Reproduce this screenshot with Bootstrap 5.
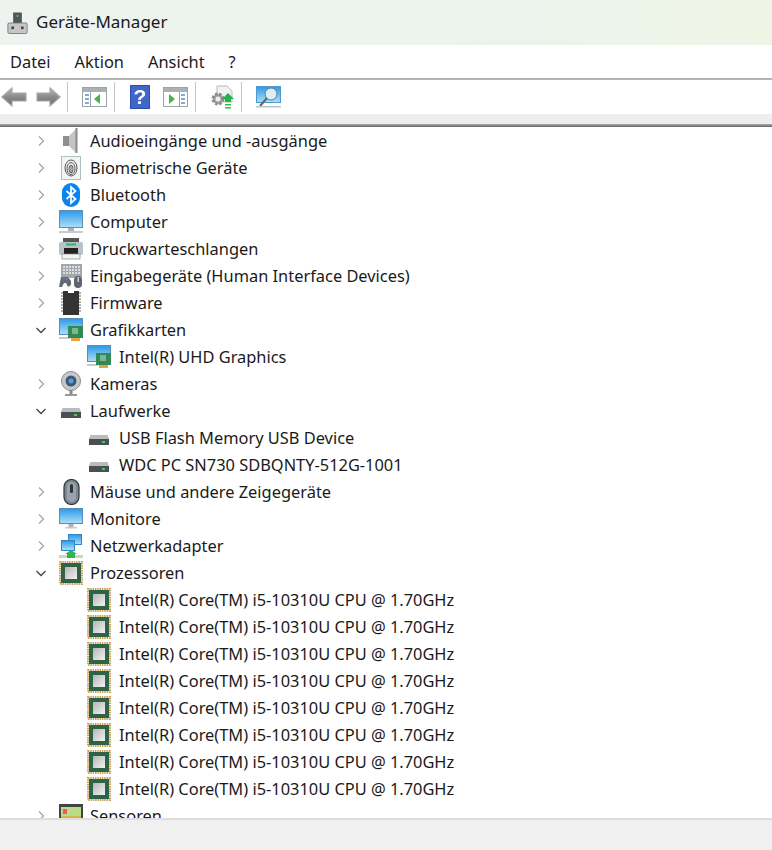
<!DOCTYPE html>
<html lang="de">
  <head>
    <meta charset="UTF-8" />
    <meta name="viewport" content="width=device-width, initial-scale=1.0" />
    <title>Geräte-Manager</title>
    <link
      href="https://cdn.jsdelivr.net/npm/bootstrap@5.3.0/dist/css/bootstrap.min.css"
      rel="stylesheet"
    />
    <style>
      html, body { height: 850px; overflow: hidden; }
      body { font-family: "Noto Sans", "Open Sans", sans-serif; color: #1a1a1a; background: #fff; }
      .win-title { height: 45px; background: linear-gradient(90deg, #eef3f0 0%, #ecf3ec 70%, #eef5e5 100%); padding-left: 7px; font-size: 17px; }
      .win-title span { margin-left: 8px; margin-top: -1px; }
      .win-menu { height: 33px; font-size: 16.4px; padding-left: 10px; gap: 24px; border-bottom: 2px solid #b4b4b4; box-sizing: content-box; }
      .win-menu span { margin-top: 1px; }
      .win-tools { height: 34px; }
      .tool-group { height: 30px; padding: 0 7px 0 14px; border-right: 1px solid #c4c4c4; gap: 13px; }
      .tool-group svg { filter: blur(.35px); }
      .tool-group.first { padding: 0 6px 0 1px; gap: 9px; }
      .tool-group.help { padding-left: 15px; }
      .tool-group.update { padding-right: 6px; }
      .tool-group.last { border-right: 0; }
      .tool-strip { height: 10px; background: #eeeeee; }
      .tool-line { height: 3px; background: linear-gradient(180deg, #aaa, #666); }
      .dev-tree { height: 691px; overflow: hidden; font-size: 16.4px; line-height: 27px; }
      .tree-row { height: 27px; padding-left: 34px; white-space: nowrap; }
      .tree-row.child { padding-left: 86px; }
      .tree-chev { width: 14px; height: 14px; margin-right: 10px; flex: none; }
      .tree-ico { width: 26px; height: 26px; margin-right: 6px; flex: none; filter: blur(.3px); }
      .child .tree-ico { margin-right: 7px; }
      .win-status { height: 33px; background: #f0f0f0; border-top: 2px solid #dedede; }
    </style>
  </head>
  <body>
    <svg width="0" height="0" class="position-absolute">
      <defs>
        <linearGradient id="gScreen" x1="0" y1="0" x2="0" y2="1"><stop offset="0" stop-color="#2f9be8" /><stop offset="1" stop-color="#a9dcf8" /></linearGradient>
        <linearGradient id="gCore" x1="0" y1="0" x2="1" y2="1"><stop offset="0" stop-color="#b5b5b5" /><stop offset="1" stop-color="#f2f2f2" /></linearGradient>
        <linearGradient id="gArrow" x1="0" y1="0" x2="0" y2="1"><stop offset="0" stop-color="#b8b8b8" /><stop offset=".5" stop-color="#8a8a8a" /><stop offset="1" stop-color="#666" /></linearGradient>
        <symbol id="i-open" viewBox="0 0 14 14"><path d="M2.5 5l4.500 4.500 4.500-4.500" fill="none" stroke="#444" stroke-width="1.300" /></symbol>
        <symbol id="i-closed" viewBox="0 0 14 14"><path d="M5 2.500l4.500 4.500-4.500 4.500" fill="none" stroke="#a6a6a6" stroke-width="1.300" /></symbol>
        <symbol id="i-audio" viewBox="0 0 26 26"><path d="M5 8h6v10H5z" fill="#8f8f8f" /><path d="M11 8l7-7v24l-7-7z" fill="#c4c4c4" /><path d="M17.500 0h2v25h-2z" fill="#8a8a8a" /></symbol>
        <symbol id="i-bio" viewBox="0 0 26 26"><rect x="3.500" y="1.500" width="19" height="23" fill="#f2f5f2" stroke="#a9c4bd" /><g fill="none" stroke="#555" stroke-width="1"><ellipse cx="13" cy="13" rx="6" ry="8" /><ellipse cx="13" cy="13.500" rx="4" ry="6" /><ellipse cx="13" cy="14" rx="2" ry="4" /><path d="M13 11v7" /></g></symbol>
        <symbol id="i-bt" viewBox="0 0 26 26"><rect x="4" y="1" width="18" height="24" rx="9" fill="#0a82f0" /><path d="M8.500 9l9 8-4.500 4V5l4.500 4-9 8" fill="none" stroke="#fff" stroke-width="1.700" /></symbol>
        <symbol id="i-pc" viewBox="0 0 26 26"><rect x="1" y="1" width="24" height="18" fill="#5a8fb5" /><rect x="2" y="2" width="22" height="16" fill="url(#gScreen)" /><rect x="10" y="19" width="6" height="3" fill="#a9b4bc" /><rect x="1" y="22" width="24" height="2" fill="#c4ccd2" /></symbol>
        <symbol id="i-print" viewBox="0 0 26 26"><rect x="5" y="2" width="16" height="5" fill="#555" /><rect x="1" y="6" width="24" height="13" rx="2" fill="#b9c2c6" /><rect x="8" y="7.500" width="10" height="2" fill="#2fb36b" /><rect x="6" y="12" width="14" height="6" fill="#222" /><rect x="4" y="18" width="18" height="5" fill="#f4f4f4" stroke="#888" stroke-width=".7" /></symbol>
        <symbol id="i-kbd" viewBox="0 0 26 26"><rect x="3" y="1" width="21" height="14" fill="#a3a7ab" /><path d="M5 4h17M5 7h17M5 10h17" stroke="#eee" stroke-width="1.500" stroke-dasharray="2 1" /><path d="M1 24l2-10h7l3 4v4l-3 2-2-4H6l-2 4z" fill="#5f6a75" /><rect x="5" y="15" width="2" height="2" fill="#2f86e0" /><rect x="8" y="15" width="2" height="2" fill="#e0533a" /><rect x="16" y="13" width="8" height="12" rx="4" fill="#5d6670" /><rect x="19.500" y="14" width="1.500" height="5" fill="#ccc" /></symbol>
        <symbol id="i-fw" viewBox="0 0 26 26"><path d="M5 1h5v2h6V1h5v24H5z" fill="#333" /><path d="M3 3h2M3 6h2M3 9h2M3 12h2M3 15h2M3 18h2M3 21h2M21 3h2M21 6h2M21 9h2M21 12h2M21 15h2M21 18h2M21 21h2" stroke="#999" stroke-width="1.500" /></symbol>
        <symbol id="i-gpu" viewBox="0 0 26 26"><rect x="1" y="1" width="24" height="17" fill="#5a8fb5" /><rect x="2" y="2" width="22" height="15" fill="url(#gScreen)" /><rect x="1" y="20" width="11" height="2" fill="#c4ccd2" /><rect x="10" y="9" width="15" height="12" fill="#2f8a58" /><rect x="14" y="11" width="6" height="6" fill="#7fb58f" /><rect x="13" y="21" width="9" height="3" fill="#e8a33c" /></symbol>
        <symbol id="i-cam" viewBox="0 0 26 26"><circle cx="13" cy="10" r="9.500" fill="#c8c8c8" stroke="#8b8b8b" /><circle cx="13" cy="10" r="5.500" fill="#3c5878" /><circle cx="13" cy="10" r="2.500" fill="#5f9bd3" /><rect x="11.500" y="19" width="3" height="4" fill="#888" /><rect x="7" y="23" width="12" height="2" fill="#999" /></symbol>
        <symbol id="i-drive" viewBox="0 0 26 26"><path d="M4.500 10h17l1.500 4H3z" fill="#b9bcbc" /><rect x="3" y="14" width="20" height="6" fill="#4b4f52" /><rect x="16" y="16" width="3" height="2" fill="#36d05a" /></symbol>
        <symbol id="i-mouse" viewBox="0 0 26 26"><rect x="6" y="0.500" width="15" height="25" rx="7.500" fill="#7b8794" stroke="#333" stroke-width="1.200" /><rect x="9" y="3" width="9" height="20" rx="4.500" fill="#97a3b0" /><rect x="12" y="5" width="3" height="9" rx="1.500" fill="#333" /></symbol>
        <symbol id="i-mon" viewBox="0 0 26 26"><rect x="1" y="2" width="24" height="16" fill="#5a8fb5" /><rect x="2" y="3" width="22" height="14" fill="url(#gScreen)" /><rect x="10.500" y="18" width="5" height="3" fill="#a9b4bc" /><rect x="7" y="21" width="12" height="1.500" fill="#c4ccd2" /></symbol>
        <symbol id="i-net" viewBox="0 0 26 26"><rect x="10" y="1" width="14" height="11" fill="#2f86c8" /><rect x="11" y="2" width="12" height="9" fill="url(#gScreen)" /><rect x="3" y="7" width="14" height="11" fill="#2f86c8" /><rect x="4" y="8" width="12" height="9" fill="url(#gScreen)" /><rect x="1" y="22" width="24" height="3" fill="#c9d6c9" /><path d="M9 25v-4H7l6-4 6 4h-2v4z" fill="#2fb54d" /></symbol>
        <symbol id="i-cpu" viewBox="0 0 26 26"><rect x="2" y="2" width="22" height="22" fill="none" stroke="#c9a45a" stroke-width="2" stroke-dasharray="1.500 .8" /><rect x="3" y="3" width="20" height="20" fill="#2f6347" /><rect x="7" y="7" width="12" height="12" fill="url(#gCore)" /></symbol>
        <symbol id="i-sensor" viewBox="0 0 26 26"><rect x="1" y="1" width="24" height="22" fill="#444" /><rect x="3" y="4" width="20" height="18" fill="#b9dc84" /><rect x="5" y="6" width="4" height="5" fill="#ef5a5a" /><path d="M3 14h20M14 14v8" stroke="#e0a83c" stroke-width="1.500" /></symbol>
        <symbol id="t-back" viewBox="0 0 26 20"><path d="M.8 10L11 1v5h14v8H11v5z" fill="url(#gArrow)" stroke="#a8a8a8" stroke-width="1.200" /></symbol>
        <symbol id="t-fwd" viewBox="0 0 25 20"><path d="M24.200 10L14 1v5H1v8h13v5z" fill="url(#gArrow)" stroke="#a8a8a8" stroke-width="1.200" /></symbol>
        <symbol id="t-left" viewBox="0 0 25 20"><rect x=".5" y=".5" width="24" height="19" fill="#fff" stroke="#9aa4a8" /><rect x="1" y="1" width="23" height="4" fill="#aab2b6" /><path d="M8.500 5v15" stroke="#9aa4a8" /><path d="M3 8h4M3 12h4M3 16h4" stroke="#5a8fc8" stroke-width="1.500" /><path d="M12 12l6-5v10z" fill="#4fb04f" /></symbol>
        <symbol id="t-right" viewBox="0 0 25 20"><rect x=".5" y=".5" width="24" height="19" fill="#fff" stroke="#9aa4a8" /><rect x="1" y="1" width="23" height="4" fill="#aab2b6" /><path d="M16.500 5v15" stroke="#9aa4a8" /><path d="M18 8h4M18 12h4M18 16h4" stroke="#5a8fc8" stroke-width="1.500" /><path d="M12 12L6 7v10z" fill="#4fb04f" /></symbol>
        <symbol id="t-help" viewBox="0 0 20 24"><rect width="20" height="24" fill="#2b4ea8" /><rect x="1" y="1" width="18" height="22" fill="#3f66c8" /><text x="10" y="19" text-anchor="middle" font-family="Liberation Sans" font-weight="700" font-size="21" fill="#fff">?</text></symbol>
        <symbol id="t-update" viewBox="0 0 25 24"><path d="M7 1h10l5 5v11H7z" fill="#f2f2f2" stroke="#bbb" /><circle cx="8" cy="14" r="5" fill="#a0a0a0" stroke="#8d8d8d" stroke-width="3" stroke-dasharray="2.500 1.500" /><circle cx="8" cy="14" r="2.500" fill="#eee" /><path d="M18 8l6 6h-3v3h-6v-3h-3z" fill="#22b44a" /><path d="M15 19h6v1.500h-6zM15 22h6v1.500h-6z" fill="#22c44a" /></symbol>
        <symbol id="t-scan" viewBox="0 0 25 23"><rect x="0" y="0" width="25" height="17" fill="#4c9ad0" /><rect x="1" y="1" width="23" height="15" fill="url(#gScreen)" /><circle cx="15" cy="8" r="6" fill="#d8eefa" stroke="#777" /><path d="M11 12l-7 8" stroke="#666" stroke-width="2" /><rect x="0" y="20" width="25" height="1.500" fill="#b8c4cc" /></symbol>
      </defs>
    </svg>

    <div class="win-title d-flex align-items-center">
      <svg width="21" height="24" viewBox="0 0 24 26"><rect x="7" y="1" width="10" height="14" fill="#555" /><rect x="11" y="4" width="2" height="2" fill="#3fd06a" /><rect x="1" y="13" width="22" height="12" rx="1.500" fill="#c6c6c6" stroke="#777" /><rect x="5" y="17" width="3" height="3" fill="#444" /><rect x="16" y="17" width="3" height="3" fill="#444" /></svg>
      <span>Geräte-Manager</span>
    </div>

    <div class="win-menu d-flex align-items-center bg-white">
      <span>Datei</span><span>Aktion</span><span>Ansicht</span><span>?</span>
    </div>

    <div class="win-tools d-flex align-items-center bg-white">
      <div class="tool-group first d-flex align-items-center">
        <svg width="26" height="20"><use href="#t-back" /></svg>
        <svg width="25" height="20"><use href="#t-fwd" /></svg>
      </div>
      <div class="tool-group d-flex align-items-center">
        <svg width="25" height="20"><use href="#t-left" /></svg>
      </div>
      <div class="tool-group help d-flex align-items-center">
        <svg width="20" height="24"><use href="#t-help" /></svg>
        <svg width="25" height="20"><use href="#t-right" /></svg>
      </div>
      <div class="tool-group update d-flex align-items-center">
        <svg width="25" height="24"><use href="#t-update" /></svg>
      </div>
      <div class="tool-group last d-flex align-items-center">
        <svg width="25" height="23"><use href="#t-scan" /></svg>
      </div>
    </div>
    <div class="tool-strip"></div>
    <div class="tool-line"></div>

    <div class="dev-tree" id="devTree"></div>
    <div class="win-status"></div>

    <script>
      const cpu = "Intel(R) Core(TM) i5-10310U CPU @ 1.70GHz";
      const rows = [
        ["closed", "audio", "Audioeingänge und -ausgänge"],
        ["closed", "bio", "Biometrische Geräte"],
        ["closed", "bt", "Bluetooth"],
        ["closed", "pc", "Computer"],
        ["closed", "print", "Druckwarteschlangen"],
        ["closed", "kbd", "Eingabegeräte (Human Interface Devices)"],
        ["closed", "fw", "Firmware"],
        ["open", "gpu", "Grafikkarten"],
        [null, "gpu", "Intel(R) UHD Graphics"],
        ["closed", "cam", "Kameras"],
        ["open", "drive", "Laufwerke"],
        [null, "drive", "USB Flash Memory USB Device"],
        [null, "drive", "WDC PC SN730 SDBQNTY-512G-1001"],
        ["closed", "mouse", "Mäuse und andere Zeigegeräte"],
        ["closed", "mon", "Monitore"],
        ["closed", "net", "Netzwerkadapter"],
        ["open", "cpu", "Prozessoren"],
        ...Array(8).fill([null, "cpu", cpu]),
        ["closed", "sensor", "Sensoren"],
      ];
      document.getElementById("devTree").innerHTML = rows
        .map(
          ([state, icon, label]) => `
          <div class="tree-row d-flex align-items-center ${state ? "" : "child"}">
            ${state ? `<svg class="tree-chev"><use href="#i-${state}" /></svg>` : ""}
            <svg class="tree-ico"><use href="#i-${icon}" /></svg>
            <span>${label}</span>
          </div>`
        )
        .join("");
    </script>
    <script src="https://cdn.jsdelivr.net/npm/bootstrap@5.3.0/dist/js/bootstrap.bundle.min.js"></script>
  </body>
</html>
